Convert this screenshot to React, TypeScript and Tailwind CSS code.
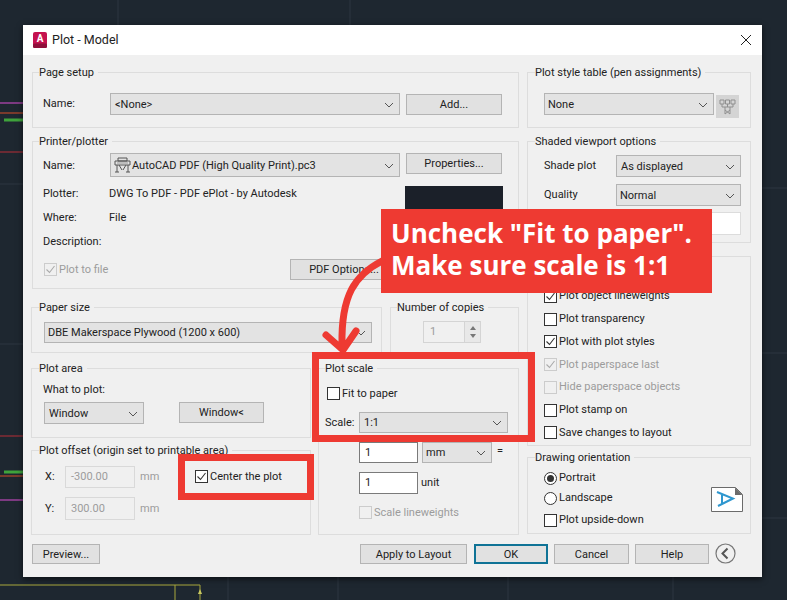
import type { ReactNode } from "react";

function Group({ title, className, legend = "left-[7px]", children }: { title?: string; className: string; legend?: string; children?: ReactNode }) {
  return (
    <div className={`relative border border-[#dddddd] ${className}`}>
      {title && (
        <span className={`absolute -top-[8px] h-4 whitespace-nowrap bg-[#f0f0f0] pr-1 leading-4 ${legend}`}>{title}</span>
      )}
      {children}
    </div>
  );
}

function Chevron() {
  return (
    <svg width="10" height="6" viewBox="0 0 10 6" fill="none" stroke="#555" strokeWidth="1" className="shrink-0">
      <path d="M1 1l4 4 4-4" />
    </svg>
  );
}

function Combo({ className, icon, text, pad = "pl-[4px]" }: { className: string; icon?: ReactNode; text: string; pad?: string }) {
  return (
    <div className={`flex shrink-0 items-center justify-between border border-[#b4b4b4] bg-[#e3e3e3] pr-[5px] pt-px ${pad} ${className}`}>
      <span className="flex items-center gap-[1px] whitespace-nowrap">
        {icon}
        {text}
      </span>
      <Chevron />
    </div>
  );
}

function Btn({ className, children }: { className: string; children: ReactNode }) {
  return (
    <div className={`flex shrink-0 items-center justify-center whitespace-nowrap border border-[#b4b4b4] bg-[#e1e1e1] pt-px ${className}`}>
      {children}
    </div>
  );
}

function Field({ className, value, disabled }: { className: string; value?: string; disabled?: boolean }) {
  return (
    <div
      className={`flex shrink-0 items-center pl-[5px] ${
        disabled ? "border border-[#d9d9d9] bg-[#f0f0f0] text-[#9c9c9c]" : "border border-[#7a7a7a] bg-white"
      } ${className}`}
    >
      {value}
    </div>
  );
}

function Check({ label, checked, disabled, className = "" }: { label: string; checked?: boolean; disabled?: boolean; className?: string }) {
  return (
    <div className={`flex items-center gap-[2px] whitespace-nowrap ${disabled ? "text-[#9c9c9c]" : ""} ${className}`}>
      <svg width="13" height="13" viewBox="0 0 13 13" fill="none" className="shrink-0">
        <rect x="0.5" y="0.5" width="12" height="12" fill={disabled ? "#f0f0f0" : "#fff"} stroke={disabled ? "#cccccc" : "#333"} />
        {checked && <path d="M2.5 6.5l3 3 5-6.5" stroke={disabled ? "#aaa" : "#333"} strokeWidth="1.1" />}
      </svg>
      {label}
    </div>
  );
}

function Radio({ label, on }: { label: string; on?: boolean }) {
  return (
    <div className="flex h-5 items-center gap-[2px]">
      <svg width="13" height="13" viewBox="0 0 13 13" fill="none">
        <circle cx="6.5" cy="6.5" r="6" fill="#fff" stroke="#333" />
        {on && <circle cx="6.5" cy="6.5" r="3.5" fill="#333" />}
      </svg>
      {label}
    </div>
  );
}

function PrinterIcon() {
  return (
    <svg width="17" height="17" viewBox="0 0 17 17" fill="none" stroke="#555" strokeWidth="1">
      <path d="M4 1h9v3H4zM1 4h15v4H1zM3 8v7M14 8v7M5 8l3 5M12 8l-3 5M1 15h4M12 15h4" />
      <path d="M3 6h11" stroke="#999" />
    </svg>
  );
}

function StyleIcon() {
  return (
    <svg width="17" height="17" viewBox="0 0 17 17" fill="none" stroke="#8f8f8f" strokeWidth="1">
      <path d="M1 2h4v4H1zM6.5 2h4v4h-4zM12 2h4v4h-4zM3 6v3h11V6M8.5 6v3M6 9v7M11 9v7M6 12l5 4M11 12l-5 4" />
    </svg>
  );
}

function Backdrop() {
  return (
    <svg width="787" height="600" viewBox="0 0 787 600" fill="none" className="absolute inset-0">
      <g stroke="#2c3640" strokeWidth="1">
        <path d="M0 184h23M0 344h23M762 188h25M762 353h25M762 518h25M228 577v23M338 577v23M508 577v23M673 577v23M118 0v25M350 0v25" />
      </g>
      <path d="M0 103h23M0 500h23" stroke="#7d3a82" strokeWidth="2" />
      <path d="M0 113h23M0 476h23" stroke="#7a3a2c" strokeWidth="2" />
      <path d="M4 120h19M4 472h19" stroke="#3fa33c" strokeWidth="3" />
      <path d="M0 152h23M0 436h23" stroke="#6b2a33" strokeWidth="2" />
      <path d="M0 585h200v15M175 585v15" stroke="#a8a83c" strokeWidth="1" />
      <path d="M198 594l2-5 2 5z" fill="#c8c860" />
    </svg>
  );
}

function Annotations() {
  return (
    <>
      <div className="absolute left-[312px] top-[352px] h-[90px] w-[223px] border-[7px] border-[#ee3a32]" />
      <div className="absolute left-[178px] top-[454px] h-[46px] w-[136px] border-[7px] border-[#ee3a32]" />
      <div className="absolute left-[381px] top-[209px] flex h-[84px] w-[331px] flex-col justify-center bg-[#ee3a32] pb-[4px] pl-[10px] font-['Open_Sans',sans-serif] text-[26px] font-bold leading-[32px] text-white">
        <span className="whitespace-nowrap">Uncheck "Fit to paper".</span>
        <span className="whitespace-nowrap">Make sure scale is 1:1</span>
      </div>
      <svg width="787" height="600" viewBox="0 0 787 600" fill="none" className="absolute inset-0">
        <path
          d="M382 261C355 275 341 295 342 345M326 335l17 15 13-19"
          stroke="#ee3a32"
          strokeWidth="7"
          strokeLinecap="round"
          strokeLinejoin="round"
        />
      </svg>
    </>
  );
}

export default function App() {
  return (
    <div className="relative h-[600px] w-[787px] overflow-hidden bg-[#1e2730] pl-[23px] pt-[25px] font-['Roboto',sans-serif] text-[11px] leading-[18px] text-[#222]">
      <Backdrop />
      <div className="relative flex h-[552px] w-[739px] flex-col bg-[#f0f0f0] shadow-[0_2px_6px_rgba(0,0,0,0.6)]">
        <div className="flex h-[30px] shrink-0 items-center bg-white pl-[10px] pr-[10px] text-[12.5px]">
          <svg width="14" height="16" viewBox="0 0 14 16" className="mr-[5px] shrink-0">
            <rect width="14" height="16" rx="2" fill="#c4124f" />
            <rect y="11.5" width="14" height="4.5" rx="1.5" fill="#8e0f3a" />
            <text x="7" y="10" textAnchor="middle" fontSize="10" fontWeight="700" fill="#fff">A</text>
          </svg>
          Plot - Model
          <svg width="12" height="12" viewBox="0 0 12 12" fill="none" stroke="#222" strokeWidth="1" className="ml-auto">
            <path d="M1 1l10 10M11 1L1 11" />
          </svg>
        </div>

        <div className="flex flex-1 flex-col pl-[9px] pr-[11px] pt-[17px]">
          <div className="flex gap-[8px]">
            <div className="flex w-[487px] flex-col">
              <Group title="Page setup" legend="left-[6px]" className="h-[56px] pl-[10px] pt-[20px]">
                <div className="flex items-start">
                  <span className="w-[67px] leading-[22px]">Name:</span>
                  <Combo className="h-[22px] w-[290px]" text="<None>" />
                  <Btn className="ml-[6px] mt-[1px] h-[21px] w-[96px]">Add...</Btn>
                </div>
              </Group>

              <Group title="Printer/plotter" legend="left-[6px]" className="mt-[13px] h-[148px] pl-[10px] pt-[11px]">
                <div className="flex items-start">
                  <span className="h-6 w-[67px] leading-[26px]">Name:</span>
                  <Combo className="h-[24px] w-[290px]" pad="pl-[3px]" icon={<PrinterIcon />} text="AutoCAD PDF (High Quality Print).pc3" />
                  <Btn className="ml-[6px] h-[21px] w-[96px]">Properties...</Btn>
                </div>
                <div className="flex">
                  <div className="w-[362px] pt-[4px]">
                    <div className="flex h-6 items-center pt-px">
                      <span className="w-[66px]">Plotter:</span>DWG To PDF - PDF ePlot - by Autodesk
                    </div>
                    <div className="flex h-6 items-center pt-px">
                      <span className="w-[66px]">Where:</span>File
                    </div>
                    <div className="flex h-6 items-center pt-px">Description:</div>
                    <div className="mt-[6px] flex items-center justify-between pr-[7px]">
                      <Check label="Plot to file" checked disabled className="ml-[1px]" />
                      <Btn className="h-[21px] w-[108px]">PDF Options...</Btn>
                    </div>
                  </div>
                  <div className="mt-[9px] h-[84px] w-[98px] bg-[#1b2029]" />
                </div>
              </Group>

              <div className="-ml-px mt-[18px] flex gap-[8px]">
                <Group title="Paper size" className="h-[46px] w-[351px] pl-[12px] pt-[14px]">
                  <Combo className="h-[21px] w-[328px]" pad="pl-[3px]" text="DBE Makerspace Plywood (1200 x 600)" />
                </Group>
                <Group title="Number of copies" legend="left-[6px]" className="h-[46px] w-[129px] pl-[32px] pt-[13px]">
                  <div className="flex h-[22px] w-[58px] items-center border border-[#d4d4d4] pl-[6px] text-[#9c9c9c]">
                    1
                    <div className="ml-auto flex h-full w-[16px] flex-col items-center justify-center gap-[4px] border-l border-[#d4d4d4] bg-[#e8e8e8]">
                      <svg width="6" height="4" viewBox="0 0 6 4"><path d="M3 0l3 4H0z" fill="#777" /></svg>
                      <svg width="6" height="4" viewBox="0 0 6 4"><path d="M0 0h6L3 4z" fill="#777" /></svg>
                    </div>
                  </div>
                </Group>
              </div>

              <div className="-ml-px mt-[15px] flex gap-[7px]">
                <div className="flex w-[280px] flex-col gap-[12px]">
                  <Group title="Plot area" className="h-[70px] pl-[12px] pt-[13px]">
                    <div className="-ml-px h-4 leading-4">What to plot:</div>
                    <div className="mt-[4px] flex items-start">
                      <Combo className="h-[22px] w-[100px]" text="Window" />
                      <Btn className="ml-[35px] h-[21px] w-[85px]">Window&lt;</Btn>
                    </div>
                  </Group>
                  <Group title="Plot offset (origin set to printable area)" className="h-[85px] pl-[13px] pt-[15px]">
                    <div className="flex">
                      <div className="w-[150px]">
                        <div className="flex items-center">
                          <span className="w-[20px]">X:</span>
                          <Field className="h-[22px] w-[70px]" value="-300.00" disabled />
                          <span className="ml-[5px] text-[#9c9c9c]">mm</span>
                        </div>
                        <div className="mt-[9px] flex items-center">
                          <span className="w-[20px]">Y:</span>
                          <Field className="h-[23px] w-[70px]" value="300.00" disabled />
                          <span className="ml-[5px] text-[#9c9c9c]">mm</span>
                        </div>
                      </div>
                      <Check label="Center the plot" checked className="mt-[4px] h-[13px]" />
                    </div>
                  </Group>
                </div>

                <Group title="Plot scale" legend="left-[6px]" className="h-[167px] w-[201px] pl-[6px] pt-[18px]">
                  <Check label="Fit to paper" className="ml-[2px] h-[13px]" />
                  <div className="mt-[12px] flex items-center">
                    <span className="w-[34px]">Scale:</span>
                    <Combo className="h-[21px] w-[149px]" text="1:1" />
                  </div>
                  <div className="ml-[34px] mt-[9px] flex items-start">
                    <Field className="h-[21px] w-[59px]" value="1" />
                    <Combo className="ml-[4px] h-[21px] w-[70px]" pad="pl-[3px]" text="mm" />
                    <span className="ml-[5px]">=</span>
                  </div>
                  <div className="ml-[34px] mt-[9px] flex items-center">
                    <Field className="h-[22px] w-[59px]" value="1" />
                    <span className="ml-[3px]">unit</span>
                  </div>
                  <Check label="Scale lineweights" disabled className="ml-[34px] mt-[12px] h-[13px]" />
                </Group>
              </div>
            </div>

            <div className="flex w-[224px] flex-col">
              <Group title="Plot style table (pen assignments)" className="h-[56px] pl-[16px] pt-[20px]">
                <div className="flex items-start">
                  <Combo className="h-[22px] w-[170px]" pad="pl-[3px]" text="None" />
                  <div className="ml-[2px] mt-[2px] flex h-[23px] w-[23px] items-center justify-center bg-[#d4d4d4]">
                    <StyleIcon />
                  </div>
                </div>
              </Group>

              <Group title="Shaded viewport options" className="mt-[13px] h-[102px] pl-[16px] pt-[13px]">
                <div className="flex items-center">
                  <span className="w-[72px]">Shade plot</span>
                  <Combo className="h-[22px] w-[125px]" text="As displayed" />
                </div>
                <div className="mt-[7px] flex items-center">
                  <span className="w-[72px]">Quality</span>
                  <Combo className="h-[22px] w-[125px]" pad="pl-[3px]" text="Normal" />
                </div>
                <Field className="ml-[72px] mt-[6px] h-[23px] w-[125px] border-[#dcdcdc]!" />
              </Group>

              <Group className="mt-[13px] h-[190px] pl-[16px] pt-[28px]">
                {[
                  { label: "Plot object lineweights", checked: true },
                  { label: "Plot transparency" },
                  { label: "Plot with plot styles", checked: true },
                  { label: "Plot paperspace last", checked: true, disabled: true },
                  { label: "Hide paperspace objects", disabled: true },
                  { label: "Plot stamp on" },
                  { label: "Save changes to layout" },
                ].map((o) => (
                  <Check key={o.label} label={o.label} checked={o.checked} disabled={o.disabled} className="h-[22.75px]" />
                ))}
              </Group>

              <Group title="Drawing orientation" className="mt-[11px] h-[77px] pl-[16px] pt-[10px]">
                <div className="flex">
                  <div className="flex-1">
                    <Radio label="Portrait" on />
                    <Radio label="Landscape" />
                    <Check label="Plot upside-down" className="mt-[2px] h-5" />
                  </div>
                  <svg width="32" height="26" viewBox="0 0 32 26" fill="none" className="mr-[7px] mt-[19px]">
                    <path d="M.5.5h24l7 7v17H.5z" fill="#fff" stroke="#6b6b6b" />
                    <path d="M24 .5l7.5 7.5H24z" fill="#6b6b6b" />
                    <path d="M6 5l16 6.5L7 19M11 7v10" stroke="#2f97cf" strokeWidth="2" />
                  </svg>
                </div>
              </Group>
            </div>
          </div>

          <div className="mt-[9px] flex h-5 items-center">
            <Btn className="h-5 w-[68px]">Preview...</Btn>
            <Btn className="ml-auto h-5 w-[107px]">Apply to Layout</Btn>
            <Btn className="ml-[7px] h-5 w-[74px] border-2 border-[#0f7396]!">OK</Btn>
            <Btn className="ml-[6px] h-5 w-[75px]">Cancel</Btn>
            <Btn className="ml-[6px] h-5 w-[74px]">Help</Btn>
            <svg width="21" height="21" viewBox="0 0 21 21" fill="none" className="ml-[6px] mr-[15px] -translate-y-[1px]">
              <circle cx="10.5" cy="10.5" r="9.5" stroke="#777" strokeWidth="1.2" />
              <path d="M12.5 5.5l-5 5 5 5" stroke="#555" strokeWidth="2" />
            </svg>
          </div>
        </div>
      </div>
      <Annotations />
    </div>
  );
}
